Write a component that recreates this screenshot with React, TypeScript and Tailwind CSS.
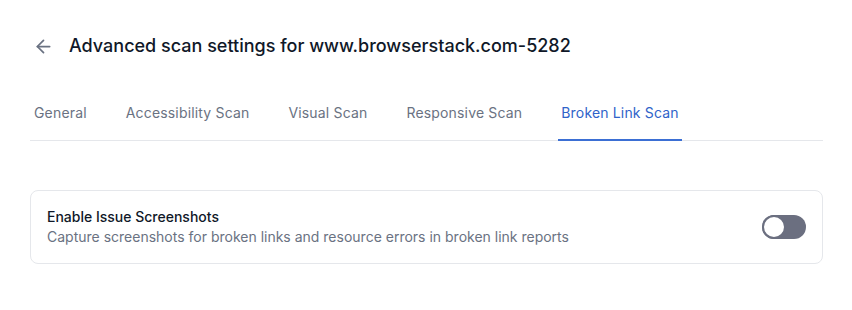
import { ArrowLeft } from "lucide-react";

const tabs = ["General", "Accessibility Scan", "Visual Scan", "Responsive Scan", "Broken Link Scan"];

export default function App() {
  const active = "Broken Link Scan";
  return (
    <div className="w-[852px] h-[310px] bg-white pl-[30px] pr-[29px] pt-[32px] font-['Inter',sans-serif] antialiased">
      <div className="flex items-center gap-[12px] h-7">
        <button className="flex items-center justify-center w-[27px] h-[27px] text-gray-500">
          <ArrowLeft size={21} strokeWidth={2} />
        </button>
        <h1 className="text-[18px] leading-7 font-medium text-gray-900">
          Advanced scan settings for www.browserstack.com-5282
        </h1>
      </div>

      <div className="mt-[31px] flex gap-[33px] border-b border-gray-200 pl-[1px]">
        {tabs.map((t) => (
          <div
            key={t}
            className={
              "px-[3px] pt-3 pb-[16px] -mb-px text-sm leading-5 tracking-[0.012em] border-b-2 " +
              (t === active ? "border-[#3b6fd4] text-[#2f63c9]" : "border-transparent text-gray-500")
            }
          >
            {t}
          </div>
        ))}
      </div>

      <div className="mt-[49px] flex items-center justify-between rounded-lg border border-gray-200 px-4 py-4">
        <div>
          <div className="text-sm leading-5 font-medium text-gray-900">Enable Issue Screenshots</div>
          <div className="text-sm leading-5 text-gray-500">
            Capture screenshots for broken links and resource errors in broken link reports
          </div>
        </div>
        <button className="relative w-11 h-6 rounded-full bg-[#6b6f80] shrink-0">
          <span className="absolute left-0 top-0 w-6 h-6 rounded-full bg-white border-2 border-[#6b6f80]" />
        </button>
      </div>
    </div>
  );
}
